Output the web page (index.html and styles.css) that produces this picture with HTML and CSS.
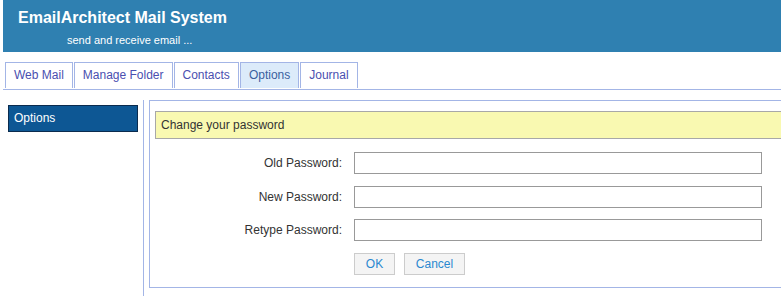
FILE: index.html
```html
<!DOCTYPE html>
<html lang="en">
<head>
  <meta charset="UTF-8">
  <title>EmailArchitect Mail System - Options</title>
  <link rel="stylesheet" href="styles.css">
</head>
<body>
  <div class="page">
    <!-- Header -->
    <div class="header">
      <div class="header-title">EmailArchitect Mail System</div>
      <div class="header-sub">send and receive email ...</div>
    </div>

    <!-- Tabs -->
    <div class="tabs">
      <a href="#" class="tab">Web Mail</a>
      <a href="#" class="tab">Manage Folder</a>
      <a href="#" class="tab">Contacts</a>
      <a href="#" class="tab tab-active">Options</a>
      <a href="#" class="tab">Journal</a>
    </div>

    <div class="main">
      <div class="sidebar">
        <div class="side-item">Options</div>
      </div>

      <div class="panel">
        <div class="panel-title">Change your password</div>

        <div class="form">
          <label class="form-label" for="old-pass">Old Password:</label>
          <input class="form-input" type="password" id="old-pass">

          <label class="form-label" for="new-pass">New Password:</label>
          <input class="form-input" type="password" id="new-pass">

          <label class="form-label" for="retype-pass">Retype Password:</label>
          <input class="form-input" type="password" id="retype-pass">

          <div></div>
          <div class="form-buttons">
            <button class="btn btn-ok">OK</button>
            <button class="btn btn-cancel">Cancel</button>
          </div>
        </div>
      </div>
    </div>
  </div>
</body>
</html>
```

FILE: styles.css
```css
html {
  overflow: hidden;
}

body {
  margin: 0;
  padding: 0 0 0 3px;
  font-family: "Liberation Sans", Arial, sans-serif;
  font-size: 12px;
  color: #333;
  background-color: #fff;
}

/* Header */
.header {
  height: 52px;
  background-color: #2f80b1;
  color: #fff;
  padding-left: 15px;
  box-sizing: border-box;
}

.header-title {
  font-size: 16px;
  font-weight: bold;
  padding-top: 9px;
  line-height: 18px;
}

.header-sub {
  font-size: 11px;
  margin-left: 49px;
  margin-top: 7px;
  line-height: 13px;
}

/* Tabs */
.tabs {
  display: flex;
  gap: 1px;
  margin-top: 10px;
  padding-left: 2px;
  border-bottom: 1px solid #a3b5e6;
}

.tab {
  display: block;
  height: 26px;
  line-height: 24px;
  padding: 0 8px;
  border: 1px solid #a3b5e6;
  border-bottom: none;
  box-sizing: border-box;
  color: #4a4fb0;
  text-decoration: none;
  margin-bottom: 1px;
}

.tab-active {
  background-color: #dcebfa;
  color: #3a5f9e;
}

/* Main area */
.main {
  display: flex;
  padding-top: 10px;
}

.sidebar {
  width: 141px;
  flex-shrink: 0;
  min-height: 196px;
  border-right: 1px solid #a3b5e6;
  box-sizing: border-box;
  padding: 5px 0 0 5px;
}

.side-item {
  width: 130px;
  height: 27px;
  line-height: 25px;
  box-sizing: border-box;
  padding-left: 5px;
  background-color: #0d5794;
  border: 1px solid #0a2b4e;
  color: #fff;
}

.panel {
  flex: 1;
  margin-left: 5px;
  height: 188px;
  border: 1px solid #a3b5e6;
  border-right: none;
  box-sizing: border-box;
  padding: 10px 0 0 5px;
}

.panel-title {
  height: 28px;
  line-height: 26px;
  box-sizing: border-box;
  padding-left: 5px;
  background-color: #f9f9b1;
  border: 1px solid #a8a8a8;
  border-right: none;
  color: #333;
}

.form {
  display: grid;
  grid-template-columns: 187px 408px;
  column-gap: 12px;
  row-gap: 11.5px;
  margin-top: 13px;
  align-items: center;
}

.form-label {
  text-align: right;
  color: #333;
}

.form-input {
  height: 22px;
  margin: 0;
  padding: 0 4px;
  border: 1px solid #999;
  box-sizing: border-box;
  font-family: inherit;
}

.form-buttons {
  display: flex;
  gap: 9px;
}

.btn {
  height: 22px;
  margin: 0;
  padding: 0;
  background-color: #f4f4f4;
  border: 1px solid #ccc;
  color: #2a88d0;
  font-family: inherit;
  font-size: 12px;
  cursor: pointer;
}

.btn-ok {
  width: 41px;
}

.btn-cancel {
  width: 61px;
}
```
